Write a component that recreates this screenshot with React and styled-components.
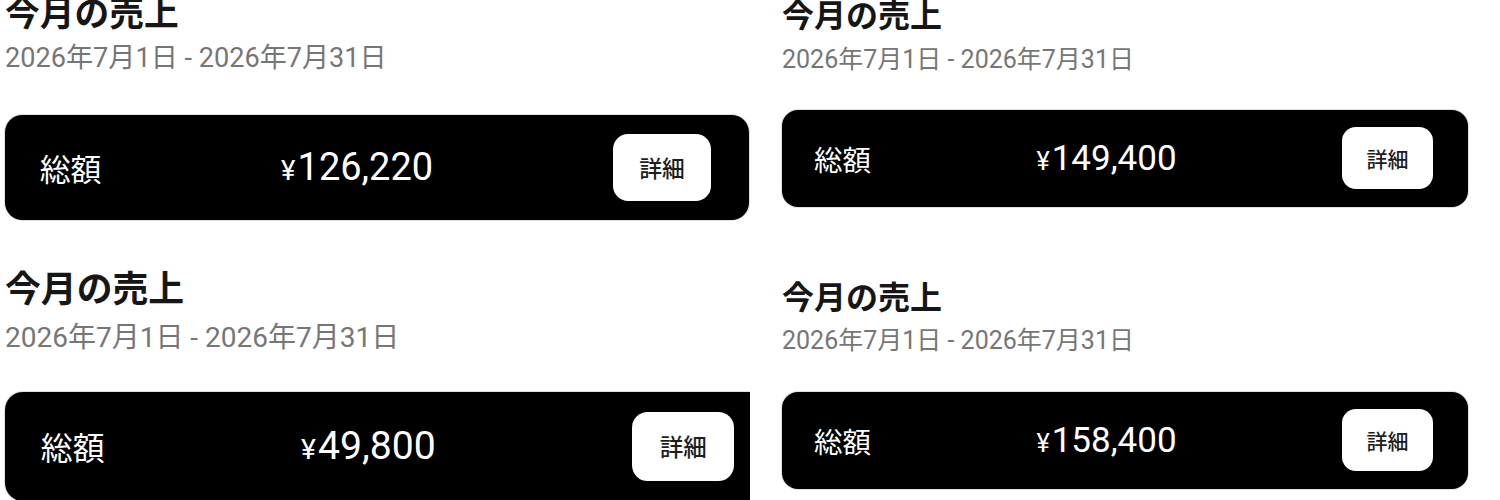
import React from "react";
import styled, { createGlobalStyle } from "styled-components";

const GlobalStyle = createGlobalStyle`
  html, body {
    margin: 0;
    padding: 0;
    background: #fff;
  }
  body {
    font-family: Roboto, "Noto Sans CJK JP", sans-serif;
  }
`;

const panels = [
  { id: "a", s: 1.085, x: 5, top: -7, dateGap: 5, cardGap: 39, total: "126,220" },
  { id: "b", s: 1, x: 32, top: -4, dateGap: 8, cardGap: 33.5, total: "149,400" },
  { id: "c", s: 1.12, x: 5, top: 18, dateGap: 7, cardGap: 36.5, total: "49,800" },
  { id: "d", s: 1, x: 32, top: 28, dateGap: 7, cardGap: 34.5, total: "158,400" },
];

const SalesPanel = ({ s, x, top, dateGap, cardGap, total }) => (
  <Panel $s={s} $x={x} $top={top} $dateGap={dateGap} $cardGap={cardGap}>
    <Title>今月の売上</Title>
    <Period>2026年7月1日 - 2026年7月31日</Period>
    <TotalCard>
      <Label>総額</Label>
      <Amount>
        <Yen>¥</Yen>
        {total}
      </Amount>
      <DetailButton type="button">詳細</DetailButton>
    </TotalCard>
  </Panel>
);

const App = () => (
  <>
    <GlobalStyle />
    <Sheet>
      {panels.map((p) => (
        <SalesPanel key={p.id} {...p} />
      ))}
    </Sheet>
  </>
);

const Sheet = styled.main`
  display: grid;
  grid-template-columns: repeat(2, 750px);
  grid-auto-rows: 250px;
  width: 1500px;
`;

const Panel = styled.section`
  --s: ${(p) => p.$s};
  display: flex;
  flex-direction: column;
  align-items: flex-start;
  overflow: hidden;
  padding-left: ${(p) => p.$x}px;
  box-sizing: border-box;

  h2 {
    margin-top: ${(p) => p.$top}px;
  }
  p {
    margin-top: ${(p) => p.$dateGap}px;
  }
  > div {
    margin-top: ${(p) => p.$cardGap}px;
  }
`;

const Title = styled.h2`
  margin: 0;
  font-size: calc(32px * var(--s));
  line-height: calc(40px * var(--s));
  font-weight: 700;
  color: #161616;
  white-space: nowrap;
`;

const Period = styled.p`
  margin: 0;
  font-size: calc(25px * var(--s));
  line-height: calc(32px * var(--s));
  color: #767676;
  white-space: nowrap;
`;

const TotalCard = styled.div`
  display: flex;
  align-items: center;
  justify-content: space-between;
  flex-shrink: 0;
  box-sizing: border-box;
  width: calc(686px * var(--s));
  height: calc(97px * var(--s));
  padding: 0 calc(35px * var(--s)) 0 calc(32px * var(--s));
  border-radius: calc(16px * var(--s));
  background: #000;
  box-shadow: 0 0 0 1px rgba(0, 0, 0, 0.12);
`;

const Label = styled.span`
  font-size: calc(28.5px * var(--s));
  color: #fff;
`;

const Amount = styled.span`
  font-size: calc(35px * var(--s));
  line-height: 1;
  color: #fff;
`;

const Yen = styled.span`
  font-size: 0.72em;
  margin-right: 0.08em;
`;

const DetailButton = styled.button`
  display: flex;
  align-items: center;
  justify-content: center;
  width: calc(91px * var(--s));
  height: calc(62px * var(--s));
  padding: 0;
  border: none;
  border-radius: calc(14px * var(--s));
  background: #fff;
  font-family: inherit;
  font-size: calc(21px * var(--s));
  font-weight: 500;
  color: #1e1e1e;
`;

export default App;
